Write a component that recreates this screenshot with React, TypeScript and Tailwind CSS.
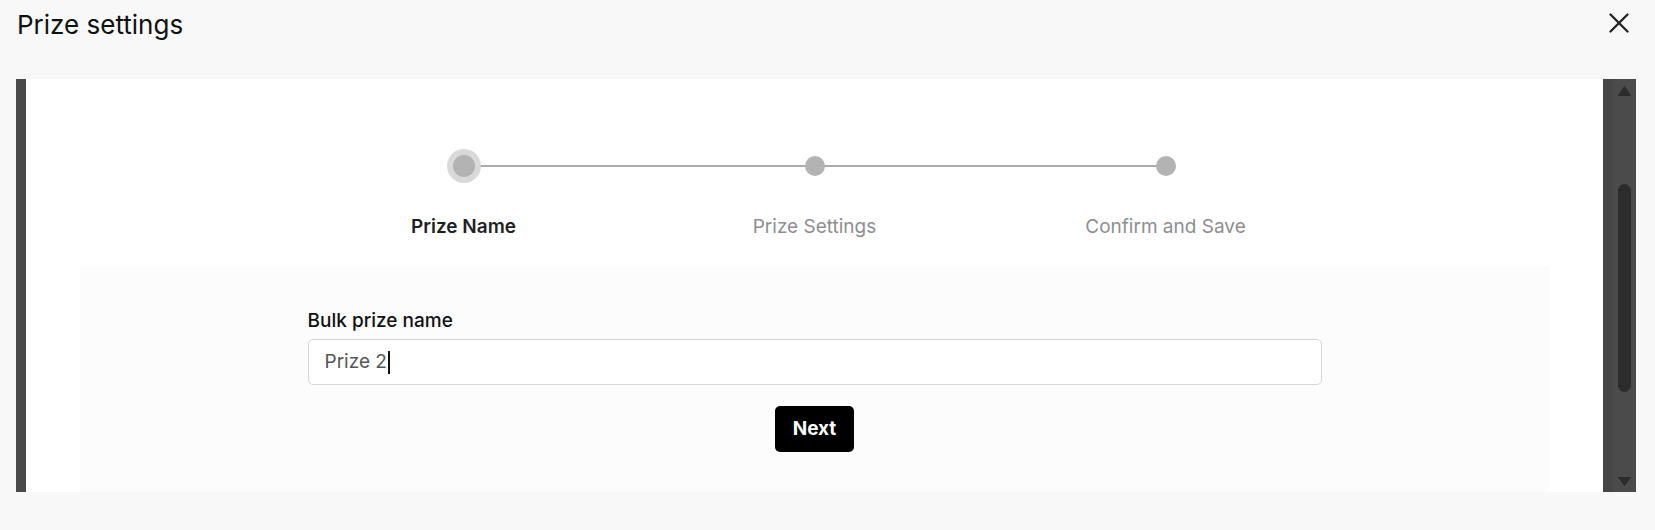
import React from 'react';

const steps = ['Prize Name', 'Prize Settings', 'Confirm and Save'];

const Stepper: React.FC<{ current: number }> = ({ current }) => {
  return (
    <div className="w-[1053px] mx-auto pt-[70px]">
      <div className="relative grid grid-cols-3 h-[34px]">
        <div className="absolute left-[175px] right-[175px] top-[16px] h-[2px] bg-[#ababab]" />
        {steps.map((s, i) => (
          <div key={s} className="relative flex items-center justify-center">
            {i === current ? (
              <div className="w-[34px] h-[34px] rounded-full bg-[#d9d9d9] flex items-center justify-center">
                <div className="w-[22px] h-[22px] rounded-full bg-[#b3b3b3]" />
              </div>
            ) : (
              <div className="w-[20px] h-[20px] rounded-full bg-[#b3b3b3]" />
            )}
          </div>
        ))}
      </div>
      <div className="grid grid-cols-3 mt-[32px]">
        {steps.map((s, i) => (
          <div
            key={s}
            className={`text-center text-[19px] leading-[23px] ${
              i === current ? 'font-semibold text-[#1f1f1f]' : 'text-[#8e8e8e]'
            }`}
          >
            {s}
          </div>
        ))}
      </div>
    </div>
  );
};

const Scrollbar = () => (
  <div className="flex">
    <div className="w-[10px] bg-[#464646]" />
    <div className="w-[23px] bg-[#4b4b4b] flex flex-col items-center pt-[7px]">
      <svg width="13" height="10" viewBox="0 0 13 10">
        <path d="M6.5 0.5 L12.5 9.5 L0.5 9.5 Z" fill="#2c2c2c" strokeLinejoin="round" stroke="#2c2c2c" strokeWidth="1" />
      </svg>
      <div className="mt-[88px] w-[13px] h-[208px] rounded-full bg-[#2c2c2c]" />
      <svg className="mt-[85px]" width="13" height="9" viewBox="0 0 13 9">
        <path d="M0.5 0.5 L12.5 0.5 L6.5 8.5 Z" fill="#2c2c2c" strokeLinejoin="round" stroke="#2c2c2c" strokeWidth="1" />
      </svg>
    </div>
  </div>
);

export default function App() {
  return (
    <div
      className="h-[530px] bg-[#f8f8f8] flex flex-col overflow-hidden"
      style={{ fontFamily: 'Inter, "Noto Sans", sans-serif' }}
    >
      <div className="h-[79px] flex items-start justify-between pl-[17px] pr-[26px]">
        <h1 className="mt-[9px] text-[26px] leading-[31px] text-[#111]">Prize settings</h1>
        <button className="mt-[13px] text-[#222]" title="Close">
          <svg width="20" height="20" viewBox="0 0 20 20" fill="none" stroke="currentColor" strokeWidth="2.3" strokeLinecap="round">
            <path d="M1.5 1.5 L18.5 18.5 M18.5 1.5 L1.5 18.5" />
          </svg>
        </button>
      </div>

      <div className="h-[413px] ml-[16px] mr-[19px] flex">
        <div className="w-[10px] bg-[#4a4a4a]" />
        <div className="flex-1 bg-white flex flex-col overflow-hidden">
          <Stepper current={0} />
          <div className="mt-[28px] mx-[54px] flex-1 bg-[#fcfcfc] pt-[43px]">
            <div className="w-[1014px] mx-auto flex flex-col">
              <label className="text-[19px] leading-[23px] font-medium text-[#111] mb-[7px]">
                Bulk prize name
              </label>
              <div className="h-[46px] bg-white border border-[#d6d6d6] rounded-[5px] flex items-center pl-[16px] text-[19px] text-[#555]">
                <span>Prize 2</span>
                <span className="w-[2px] h-[23px] bg-[#111] ml-[1px]" />
              </div>
              <div className="flex justify-center mt-[21px]">
                <button className="w-[79px] h-[46px] bg-black text-white rounded-[5px] text-[19px] font-bold">
                  Next
                </button>
              </div>
            </div>
          </div>
        </div>
        <Scrollbar />
      </div>
    </div>
  );
}
